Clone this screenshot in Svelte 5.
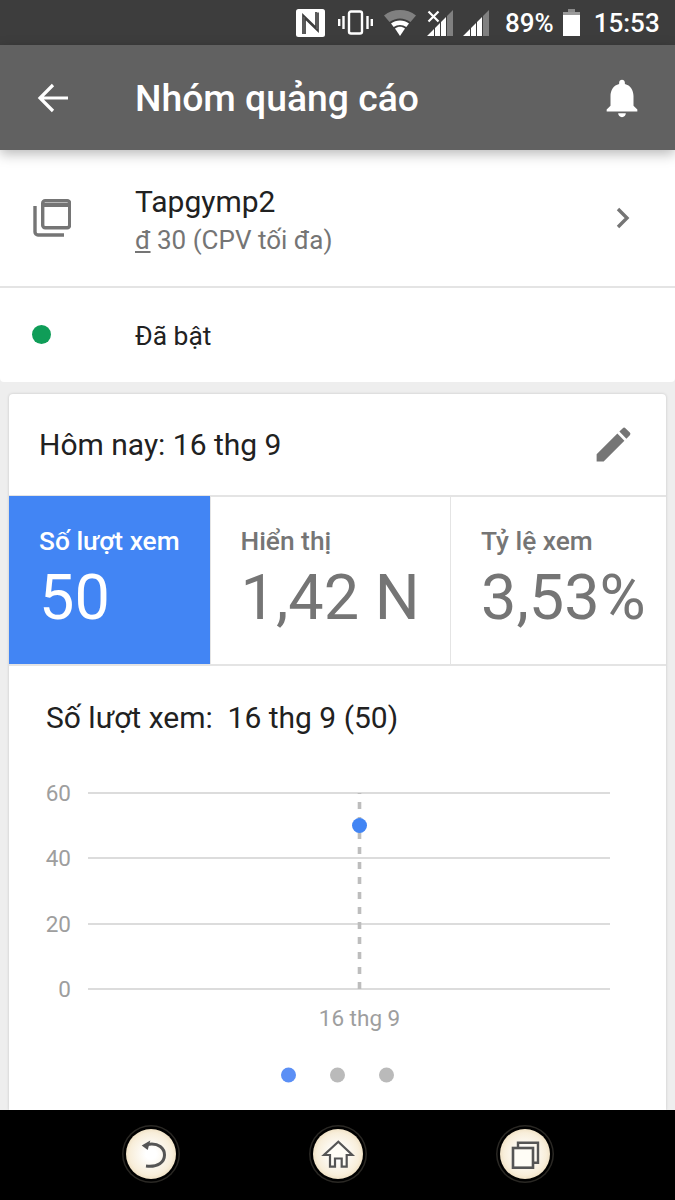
<script>
  const tiles = [
    { label: 'Số lượt xem', value: '50', active: true },
    { label: 'Hiển thị', value: '1,42 N' },
    { label: 'Tỷ lệ xem', value: '3,53%' }
  ];
  const grid = [{ y: 793, t: '60' }, { y: 858, t: '40' }, { y: 924, t: '20' }, { y: 989, t: '0' }];
</script>

<div class="screen">
  <div class="status">
    <svg class="nfc" viewBox="0 0 29 28" width="29" height="28">
      <rect width="29" height="28" rx="2.500" fill="#fff"/>
      <path d="M7 25V6l13 12.500V3M22 3.500v18.500L9 9.500V25" fill="none" stroke="#3d3d3d" stroke-width="1.700"/>
    </svg>
    <svg class="vib" viewBox="0 0 35 25" width="35" height="25">
      <rect x="11" y="1.500" width="13" height="22" rx="2" fill="none" stroke="#fff" stroke-width="2.400"/>
      <path d="M5.500 6v13M1.200 9v7M29.500 6v13M33.800 9v7" stroke="#fff" stroke-width="2.400"/>
    </svg>
    <svg class="wifi" viewBox="0 0 32 26" width="32" height="26">
      <path d="M0 5.500C9-1.800 23-1.800 32 5.500L26.500 12C20 7.200 12 7.200 5.500 12z" fill="#808080"/>
      <path d="M7 13.500C12 9.500 20 9.500 25 13.500L22.300 17c-3.700-2.700-8.900-2.700-12.600 0z" fill="#fff"/>
      <path d="M11 18.500c3-2.200 7-2.200 10 0L16 26z" fill="#fff"/>
    </svg>
    <svg class="sig1" viewBox="0 0 26 26" width="26" height="26">
      <path d="M20 6 26 0v26h-6z" fill="#808080"/>
      <path d="M0 26 7 19v7zM8 18l5-5v13H8zM14 12l5-5v19h-5z" fill="#fff"/>
      <path d="M1.500 1.500l10 10M11.500 1.500l-10 10" stroke="#fff" stroke-width="2.200"/>
    </svg>
    <svg class="sig2" viewBox="0 0 26 26" width="26" height="26">
      <path d="M20 6 26 0v26h-6z" fill="#808080"/>
      <path d="M0 26 7 19v7zM8 18l5-5v13H8zM14 12l5-5v19h-5z" fill="#fff"/>
    </svg>
    <span class="pct">89%</span>
    <svg class="batt" viewBox="0 0 17 27" width="17" height="27">
      <path d="M5 0h7v3H5z" fill="#8a8a8a"/>
      <path d="M0 3h17v3H0z" fill="#9a9a9a"/>
      <path d="M0 6h17v21H0z" fill="#fff"/>
    </svg>
    <span class="time">15:53</span>
  </div>

  <header class="appbar">
    <svg class="back" viewBox="0 0 32 30" width="32" height="30">
      <path d="M31 15H3M16 2 3 15l13 13" fill="none" stroke="#fff" stroke-width="3.200"/>
    </svg>
    <h1>Nhóm quảng cáo</h1>
    <svg class="bell" viewBox="0 0 24 24" width="46" height="46">
      <path d="M12 22c1.100 0 2-.9 2-2h-4c0 1.100.89 2 2 2zm6-6v-5c0-3.070-1.640-5.640-4.500-6.320V4c0-.83-.67-1.500-1.500-1.500s-1.500.67-1.500 1.500v.68C7.630 5.360 6 7.920 6 11v5l-2 2v1h16v-1l-2-2z" fill="#fff"/>
    </svg>
  </header>

  <section class="list">
    <div class="row first">
      <svg class="copy" viewBox="0 0 38 38" width="38" height="38">
        <path d="M2 7v26a3 3 0 0 0 3 3h26" fill="none" stroke="#757575" stroke-width="3.400"/>
        <rect x="9.700" y="1.700" width="27" height="27" rx="2.500" fill="none" stroke="#757575" stroke-width="3.400"/>
        <path d="M9.700 4h27v4h-27z" fill="#757575"/>
      </svg>
      <div class="rowtext">
        <div class="name">Tapgymp2</div>
        <div class="sub"><span class="cur">đ</span> 30 (CPV tối đa)</div>
      </div>
      <svg class="chev" viewBox="0 0 16 24" width="16" height="24">
        <path d="M3 3l9 9-9 9" fill="none" stroke="#757575" stroke-width="3.400"/>
      </svg>
    </div>
    <div class="row second">
      <span class="dot"></span>
      <span class="state">Đã bật</span>
    </div>
  </section>

  <section class="card">
    <div class="cardhead">
      <span>Hôm nay: 16 thg 9</span>
      <svg class="pencil" viewBox="0 0 24 24" width="45" height="45">
        <path d="M3 17.250V21h3.750L17.810 9.940l-3.750-3.750L3 17.250zM20.710 7.040c.39-.39.39-1.020 0-1.410l-2.340-2.340c-.39-.39-1.020-.39-1.410 0l-1.830 1.830 3.750 3.750 1.830-1.830z" fill="#757575"/>
      </svg>
    </div>
    <div class="tiles">
      {#each tiles as t}
        <div class="tile" class:active={t.active}>
          <div class="label">{t.label}</div>
          <div class="value">{t.value}</div>
        </div>
      {/each}
    </div>
    <div class="charttitle">Số lượt xem:&nbsp; 16 thg 9 (50)</div>
    <svg class="chart" viewBox="0 0 657 340" width="657" height="340">
      <g transform="translate(-9,-770)">
        {#each grid as g}
          <line x1="88" x2="610" y1={g.y} y2={g.y} stroke="#dcdcdc" stroke-width="2"/>
          <text x="71" y={g.y + 8} text-anchor="end" class="ax">{g.t}</text>
        {/each}
        <line x1="359.500" x2="359.500" y1="793" y2="995" stroke="#bdbdbd" stroke-width="3.600" stroke-dasharray="7 8" stroke-dashoffset="-9"/>
        <circle cx="359.500" cy="825.500" r="7.500" fill="#4285f4"/>
        <text x="359.500" y="1026" text-anchor="middle" class="ax">16 thg 9</text>
        <circle cx="288.500" cy="1075" r="7.500" fill="#5b8ff5"/>
        <circle cx="337.500" cy="1075" r="7.500" fill="#bababa"/>
        <circle cx="386.500" cy="1075" r="7.500" fill="#bababa"/>
      </g>
    </svg>
  </section>

  <nav class="navbar">
    <div class="btn">
      <svg viewBox="0 0 50 50" width="50" height="50">
        <path d="M21 15.500C33 13 38.500 20 38.500 26 38.500 33 32 38.500 20 37" fill="none" stroke="#555" stroke-width="3"/>
        <path d="M24.300 11.500 21.700 21 15.700 16.500z" fill="#555"/>
      </svg>
    </div>
    <div class="btn">
      <svg viewBox="0 0 50 50" width="50" height="50">
        <path d="M25.300 12.700 11 26h6v11.700h5v-8.200h6.700v8.200h5V26h5.600z" fill="#fffdf6" stroke="#555" stroke-width="2.200"/>
      </svg>
    </div>
    <div class="btn">
      <svg viewBox="0 0 50 50" width="50" height="50">
        <path d="M18 18.500V13.700h20v20h-4.500" fill="none" stroke="#555" stroke-width="2.400"/>
        <rect x="13" y="19" width="20" height="19.700" fill="#fffdf6" stroke="#555" stroke-width="2.600"/>
      </svg>
    </div>
  </nav>
</div>

<style>
  :global(body) {
    margin: 0;
  }
  .screen {
    width: 675px;
    height: 1200px;
    display: flex;
    flex-direction: column;
    background: #eeeeee;
    font-family: Roboto, "Noto Sans", sans-serif;
    overflow: hidden;
  }
  svg {
    display: block;
    flex: none;
  }
  .status {
    height: 45px;
    flex: none;
    background: #3d3d3d;
    display: flex;
    align-items: center;
    color: #fff;
    padding-left: 296px;
    box-sizing: border-box;
  }
  .vib { margin-left: 13px; }
  .wifi { margin-left: 11px; }
  .sig1 { margin-left: 11px; }
  .sig2 { margin-left: 10px; }
  .pct {
    margin-left: 16px;
    font-size: 26px;
    font-weight: 500;
  }
  .batt { margin-left: 9px; }
  .time {
    margin-left: 14px;
    font-size: 26px;
    font-weight: 500;
  }
  .appbar {
    height: 105px;
    flex: none;
    background: #616161;
    display: flex;
    align-items: center;
    padding: 0 30px 0 37px;
    box-shadow: 0 4px 12px rgba(0, 0, 0, 0.28);
    position: relative;
    z-index: 1;
    box-sizing: border-box;
  }
  h1 {
    margin: 2px 0 0 66px;
    flex: 1;
    font-size: 37.300px;
    font-weight: 500;
    color: #fff;
    line-height: 1;
  }
  .bell {
    margin-top: 1px;
  }
  .list {
    height: 232px;
    flex: none;
    background: #fff;
    border-radius: 0 0 4px 4px;
  }
  .row {
    display: flex;
    align-items: center;
    box-sizing: border-box;
  }
  .first {
    height: 138px;
    padding: 0 44px 0 33px;
    border-bottom: 2px solid #e4e4e4;
  }
  .rowtext {
    flex: 1;
    margin-left: 64px;
    padding-top: 6px;
  }
  .name {
    font-size: 30px;
    color: #212121;
    line-height: 38px;
  }
  .sub {
    font-size: 26px;
    color: #757575;
    line-height: 38px;
  }
  .cur {
    text-decoration: underline;
  }
  .second {
    height: 94px;
    padding-left: 32px;
  }
  .dot {
    width: 19px;
    height: 19px;
    border-radius: 50%;
    background: #0f9d58;
    margin-top: -1px;
  }
  .state {
    margin-left: 84px;
    margin-top: 2px;
    font-size: 26.400px;
    color: #212121;
  }
  .card {
    margin: 12px 9px 0;
    height: 716px;
    flex: none;
    background: #fff;
    border-radius: 4px 4px 0 0;
    box-shadow: 0 0 3px rgba(0, 0, 0, 0.18);
  }
  .cardhead {
    height: 101px;
    display: flex;
    align-items: center;
    justify-content: space-between;
    padding: 0 30px 0 30px;
    font-size: 30px;
    color: #212121;
    box-sizing: border-box;
  }
  .tiles {
    display: grid;
    grid-template-columns: 200.500px 240.500px 1fr;
    height: 171px;
    border-top: 2px solid #e4e4e4;
    border-bottom: 2px solid #e4e4e4;
    box-sizing: border-box;
  }
  .tile {
    padding: 28px 0 0 30px;
    color: #757575;
    border-left: 1px solid #e4e4e4;
  }
  .tile.active {
    background: #4285f4;
    color: #fff;
    border-left: 0;
    margin-top: -1px;
    padding-top: 29px;
  }
  .label {
    font-size: 26.300px;
    font-weight: 500;
    line-height: 32px;
  }
  .value {
    font-size: 63px;
    line-height: 64px;
    margin-top: 9px;
  }
  .charttitle {
    font-size: 30px;
    color: #212121;
    padding: 35px 0 35px 37px;
    line-height: 34px;
  }
  .ax {
    font-size: 22.500px;
    fill: #9e9e9e;
    font-family: Roboto, sans-serif;
  }
  .navbar {
    flex: 1;
    background: #000;
    display: grid;
    grid-template-columns: repeat(3, 50px);
    justify-content: center;
    column-gap: 137px;
    align-items: center;
    position: relative;
    z-index: 2;
    padding-bottom: 2px;
  }
  .btn {
    width: 50px;
    height: 50px;
    border-radius: 50%;
    background: radial-gradient(circle at center, #ffffff 15%, #f8eeda 60%, #dfc594 100%);
    box-shadow: 0 0 0 2.500px #000, 0 0 0 4px #2a2824;
  }
</style>
